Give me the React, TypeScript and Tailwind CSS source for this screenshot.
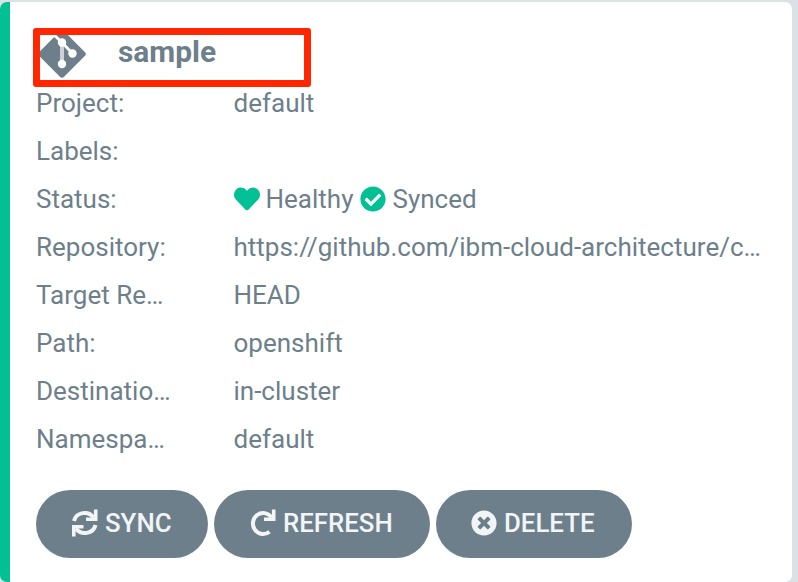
import type { ReactNode } from "react";
import { FaCheckCircle, FaHeart, FaTimesCircle } from "react-icons/fa";

function GitIcon() {
  return (
    <svg viewBox="0 0 50 50" className="mt-[27px] ml-[1px] size-[50px]" fill="none">
      <rect x="7.4" y="7.4" width="35.2" height="35.2" rx="3" transform="rotate(45 25 25)" fill="#6d7f8b" />
      <path d="M25 13V35" stroke="#cbd1d6" strokeWidth="4" />
      <path d="M16 5L25 13.5L35.5 24.5" stroke="#fff" strokeWidth="2.8" />
      <circle cx="25" cy="13.5" r="4.2" fill="#fff" />
      <circle cx="35.5" cy="24.5" r="4.2" fill="#fff" />
      <circle cx="25" cy="35" r="4.2" fill="#fff" />
    </svg>
  );
}

function SyncIcon() {
  return (
    <svg viewBox="0 0 27 28" className="-mt-[2px] h-[28px] w-[27px]" fill="none" stroke="currentColor" strokeWidth="4">
      <path d="M3 12A10.8 10.3 0 0 1 22.5 8.5M24.5 16A10.8 10.3 0 0 1 5 19.5" />
      <path d="M24.7 0.5V10.2H15M2.8 27.5V17.8H12.5" strokeWidth="3.6" />
    </svg>
  );
}

function RedoIcon() {
  return (
    <svg viewBox="0 0 27 28" className="-mt-[2px] h-[28px] w-[27px]" fill="none" stroke="currentColor" strokeWidth="4">
      <path d="M22.5 8.5A10.2 10.5 0 1 0 20.5 22.7" />
      <path d="M24.7 0.5V10.2H15" strokeWidth="3.6" />
    </svg>
  );
}

function Row({ label, children }: { label: string; children?: ReactNode }) {
  return (
    <div className="flex h-12 items-center">
      <div className="w-[197.5px] shrink-0 whitespace-nowrap">{label}</div>
      <div className="flex items-center whitespace-nowrap">{children}</div>
    </div>
  );
}

function Action({ icon, label, size }: { icon: ReactNode; label: string; size: string }) {
  return (
    <button className={`flex h-[68px] items-center gap-[7px] rounded-full bg-[#6d7f8b] pl-[35px] text-[25.8px] font-medium whitespace-nowrap text-[#f2f5f7] ${size}`}>
      {icon}
      <span className="-mt-[2px]">{label}</span>
    </button>
  );
}

export default function App() {
  return (
    <main className="h-[582px] w-[798px] overflow-hidden bg-[#dae2e7] pt-[2px] font-['Roboto',sans-serif] text-[26px] leading-[48px] text-[#6d7f8b]">
      <article className="h-[580px] w-[792px] rounded-[7px] border-l-10 border-[#00c094] bg-white pl-[26px]">
        <header className="relative flex h-[77px] items-center">
          <GitIcon />
          <h1 className="mt-[23px] ml-[31px] text-[29.9px] font-bold">sample</h1>
          <div className="absolute top-[26px] left-[-3px] h-[59px] w-[278px] rounded-[3px] border-7 border-[#ff2600]" />
        </header>
        <section>
          <Row label="Project:">default</Row>
          <Row label="Labels:" />
          <Row label="Status:">
            <FaHeart className="mr-[6px] size-[26px] text-[#00c094]" />
            <span>Healthy</span>
            <FaCheckCircle className="mr-[6px] ml-[7px] size-[26px] text-[#00c094]" />
            <span>Synced</span>
          </Row>
          <Row label="Repository:">https://github.com/ibm-cloud-architecture/c…</Row>
          <Row label="Target Re…">HEAD</Row>
          <Row label="Path:">openshift</Row>
          <Row label="Destinatio…">in-cluster</Row>
          <Row label="Namespa…">default</Row>
        </section>
        <footer className="mt-[27px] flex gap-[6px]">
          <Action icon={<SyncIcon />} label="SYNC" size="w-[172px]" />
          <Action icon={<RedoIcon />} label="REFRESH" size="w-[216px]" />
          <Action icon={<FaTimesCircle className="-mt-[2px] size-[26px]" />} label="DELETE" size="w-[196px]" />
        </footer>
      </article>
    </main>
  );
}
